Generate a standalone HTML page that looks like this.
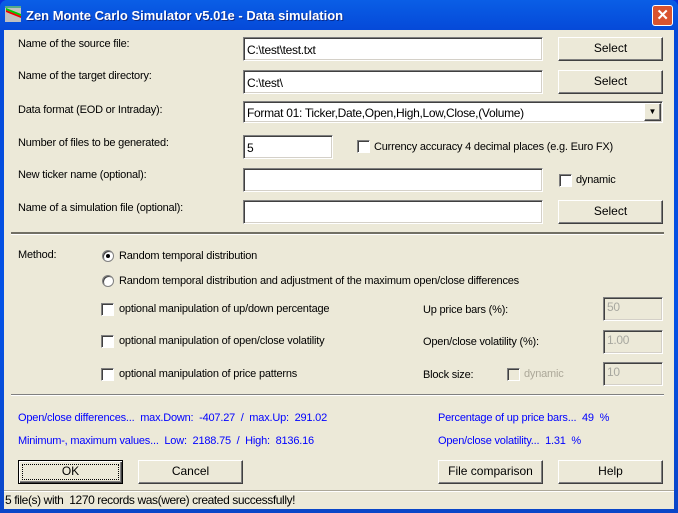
<!DOCTYPE html>
<html><head><style>
*{margin:0;padding:0;box-sizing:border-box}
body{width:678px;height:513px;overflow:hidden;font-family:"Liberation Sans",Arial,sans-serif;font-size:11px;color:#000;background:#0831d9;letter-spacing:-0.2px}
#win{position:absolute;left:0;top:0;width:678px;height:513px;background:linear-gradient(#0a5ee6,#0549d8 6%,#0452e6 60%,#0a46c8);border-radius:7px 7px 0 0}
#title{position:absolute;left:26px;top:8px;color:#fff;font-weight:bold;font-size:13px;text-shadow:1px 1px #0a2a8a;letter-spacing:0}
#close{position:absolute;left:652px;top:5px;width:21px;height:21px;border:1px solid #fff;border-radius:3px;background:#d9532f;color:#fff;font-weight:bold;font-size:15px;text-align:center;line-height:19px}
#body{position:absolute;left:4px;top:30px;width:670px;height:479px;background:#ece9d8}
.a{position:absolute;white-space:nowrap}
.lab{left:14px}
.in{position:absolute;background:#fff;border:1px solid;border-color:#808080 #fff #fff #808080;box-shadow:inset 1px 1px #404040,inset -1px -1px #d4d0c8;padding:5px 3px 0;line-height:14px;font-size:12px;letter-spacing:-0.3px}
.dis{background:#ece9d8;color:#a8a8a0}
.btn{position:absolute;background:#ece9d8;border:1px solid;border-color:#fff #404040 #404040 #fff;box-shadow:inset -1px -1px #808080;text-align:center;line-height:21px;font-size:12px;letter-spacing:0}
.cb{position:absolute;width:13px;height:13px;background:#fff;border:1px solid;border-color:#808080 #fff #fff #808080;box-shadow:inset 1px 1px #404040}
.rd{position:absolute;width:12px;height:12px;border-radius:50%;background:#fff;border:1px solid #808080;box-shadow:inset 1px 1px #404040}
.sep{position:absolute;left:7px;width:653px;border-top:1px solid #808080;border-bottom:1px solid #fff}
.blue{color:#0000ff}
</style></head><body>
<div id="win">
<svg style="position:absolute;left:5px;top:6px" width="17" height="17"><rect width="16" height="16" fill="#c0c0c0"/><path d="M1 4 L16 10 L16 12 L1 6Z" fill="#e00"/><path d="M1 2 L16 8 L16 10 L1 4Z" fill="#0c0"/><rect x="0" y="0" width="16" height="2" fill="#5a8"/></svg>
<div id="title">Zen Monte Carlo Simulator v5.01e - Data simulation</div>
<div id="close">✕</div>
<div id="body">
<div class="a lab" style="top:8px">Name of the source file:</div>
<div class="in" style="left:239px;top:7px;width:300px;height:24px">C:\test\test.txt</div>
<div class="btn" style="left:554px;top:7px;width:105px;height:24px">Select</div>

<div class="a lab" style="top:40px">Name of the target directory:</div>
<div class="in" style="left:239px;top:40px;width:300px;height:24px">C:\test\</div>
<div class="btn" style="left:554px;top:40px;width:105px;height:24px">Select</div>

<div class="a lab" style="top:74px">Data format (EOD or Intraday):</div>
<div class="in" style="left:239px;top:71px;width:420px;height:22px;padding-top:4px">Format 01: Ticker,Date,Open,High,Low,Close,(Volume)</div>
<div class="btn" style="left:640px;top:73px;width:17px;height:18px;line-height:16px;font-size:8px">▼</div>

<div class="a lab" style="top:107px">Number of files to be generated:</div>
<div class="in" style="left:239px;top:105px;width:90px;height:24px">5</div>
<div class="cb" style="left:353px;top:110px"></div>
<div class="a" style="left:370px;top:111px">Currency accuracy 4 decimal places (e.g. Euro FX)</div>

<div class="a lab" style="top:139px">New ticker name (optional):</div>
<div class="in" style="left:239px;top:138px;width:300px;height:24px"></div>
<div class="cb" style="left:555px;top:144px"></div>
<div class="a" style="left:572px;top:144px">dynamic</div>

<div class="a lab" style="top:172px">Name of a simulation file (optional):</div>
<div class="in" style="left:239px;top:170px;width:300px;height:24px"></div>
<div class="btn" style="left:554px;top:170px;width:105px;height:24px">Select</div>

<div class="sep" style="top:202px;border-top:2px solid #716f64;border-bottom:1px solid #fff"></div>

<div class="a lab" style="top:219px">Method:</div>
<div class="rd" style="left:98px;top:220px"><div style="position:absolute;left:3px;top:3px;width:4px;height:4px;background:#000;border-radius:50%"></div></div>
<div class="a" style="left:115px;top:220px">Random temporal distribution</div>
<div class="rd" style="left:98px;top:245px"></div>
<div class="a" style="left:115px;top:245px">Random temporal distribution and adjustment of the maximum open/close differences</div>

<div class="cb" style="left:97px;top:273px"></div>
<div class="a" style="left:115px;top:273px">optional manipulation of up/down percentage</div>
<div class="cb" style="left:97px;top:305px"></div>
<div class="a" style="left:115px;top:305px">optional manipulation of open/close volatility</div>
<div class="cb" style="left:97px;top:338px"></div>
<div class="a" style="left:115px;top:338px">optional manipulation of price patterns</div>

<div class="a" style="left:419px;top:274px">Up price bars (%):</div>
<div class="a" style="left:419px;top:306px">Open/close volatility (%):</div>
<div class="a" style="left:419px;top:339px">Block size:</div>
<div class="cb" style="left:503px;top:338px;background:#ece9d8"></div>
<div class="a" style="left:520px;top:338px;color:#aca899">dynamic</div>
<div class="in dis" style="left:599px;top:267px;width:60px;height:24px;padding-top:2px">50</div>
<div class="in dis" style="left:599px;top:300px;width:60px;height:24px;padding-top:2px">1.00</div>
<div class="in dis" style="left:599px;top:332px;width:60px;height:24px;padding-top:2px">10</div>

<div class="sep" style="top:364px"></div>

<div class="a blue" style="left:14px;top:382px">Open/close differences...&nbsp; max.Down:&nbsp; -407.27&nbsp; /&nbsp; max.Up:&nbsp; 291.02</div>
<div class="a blue" style="left:14px;top:405px">Minimum-, maximum values...&nbsp; Low:&nbsp; 2188.75&nbsp; /&nbsp; High:&nbsp; 8136.16</div>
<div class="a blue" style="left:434px;top:382px">Percentage of up price bars...&nbsp; 49&nbsp; %</div>
<div class="a blue" style="left:434px;top:405px">Open/close volatility...&nbsp; 1.31&nbsp; %</div>

<div class="btn" style="left:14px;top:430px;width:105px;height:24px;border:1px solid #000;box-shadow:inset 1px 1px #fff,inset -1px -1px #404040,inset -2px -2px #808080"><div style="position:absolute;left:3px;top:3px;right:3px;bottom:3px;border:1px dotted #000"></div>OK</div>
<div class="btn" style="left:134px;top:430px;width:105px;height:24px">Cancel</div>
<div class="btn" style="left:434px;top:430px;width:105px;height:24px">File comparison</div>
<div class="btn" style="left:554px;top:430px;width:105px;height:24px">Help</div>

<div style="position:absolute;left:0;top:460px;width:670px;height:19px;border-top:1px solid #aca899;box-shadow:inset 0 1px #fff"></div>
<div class="a" style="left:1px;top:463px;font-size:12px;letter-spacing:-0.4px">5 file(s) with&nbsp; 1270 records was(were) created successfully!</div>
</div>
</div>
</body></html>
